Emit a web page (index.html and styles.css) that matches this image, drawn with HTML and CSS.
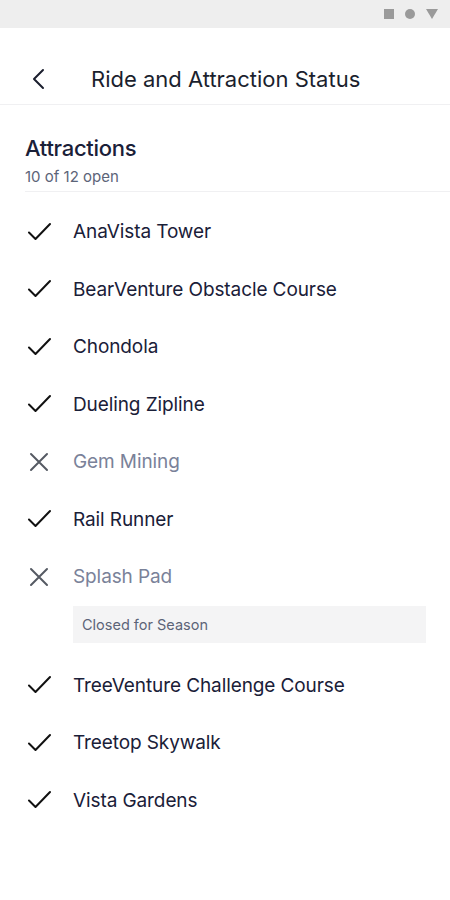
FILE: index.html
```html
<!DOCTYPE html>
<html lang="en">
<head>
  <meta charset="UTF-8" />
  <title>Ride and Attraction Status</title>
  <link rel="stylesheet" href="styles.css">
</head>
<body>

  <div class="status-bar">
    <span class="sb-square"></span>
    <span class="sb-circle"></span>
    <span class="sb-triangle"></span>
  </div>

  <header class="top-bar">
    <svg class="back" width="14" height="22" viewBox="0 0 14 22">
      <path d="M12 2 L3 11 L12 20" fill="none" stroke="#1b1f2e" stroke-width="2" stroke-linecap="round" stroke-linejoin="round"/>
    </svg>
    <h1>Ride and Attraction Status</h1>
  </header>

  <div class="section-head">
    <h2>Attractions</h2>
    <p class="count">10 of 12 open</p>
  </div>

  <ul class="list" id="list"></ul>

  <script>
    const rides = [
      { name: 'AnaVista Tower', open: true },
      { name: 'BearVenture Obstacle Course', open: true },
      { name: 'Chondola', open: true },
      { name: 'Dueling Zipline', open: true },
      { name: 'Gem Mining', open: false },
      { name: 'Rail Runner', open: true },
      { name: 'Splash Pad', open: false, note: 'Closed for Season' },
      { name: 'TreeVenture Challenge Course', open: true },
      { name: 'Treetop Skywalk', open: true },
      { name: 'Vista Gardens', open: true }
    ];

    const check = `<svg width="24" height="24" viewBox="0 0 24 24"><path d="M2 12.5 L8.5 19 L23 4" fill="none" stroke="#111" stroke-width="2" stroke-linecap="round" stroke-linejoin="round"/></svg>`;
    const cross = `<svg width="24" height="24" viewBox="0 0 24 24"><path d="M4 4 L20 20 M20 4 L4 20" fill="none" stroke="#555a63" stroke-width="2" stroke-linecap="round"/></svg>`;

    document.getElementById('list').innerHTML = rides.map(r => `
      <li class="${r.open ? 'ride' : 'ride closed'}">
        <div class="row">
          <span class="icon">${r.open ? check : cross}</span>
          <span class="name">${r.name}</span>
        </div>
        ${r.note ? `<div class="note">${r.note}</div>` : ''}
      </li>
    `).join('');
  </script>

</body>
</html>
```

FILE: styles.css
```css
body {
  margin: 0;
  font-family: Inter, 'Noto Sans', sans-serif;
  background: #fff;
  color: #1a2038;
  width: 450px;
}
.status-bar {
  height: 28px;
  background: #eeeeee;
  display: flex;
  align-items: center;
  justify-content: flex-end;
  gap: 11px;
  padding-right: 12px;
}
.sb-square {
  width: 10px;
  height: 10px;
  background: #9a9a9a;
}
.sb-circle {
  width: 10px;
  height: 10px;
  border-radius: 50%;
  background: #9a9a9a;
}
.sb-triangle {
  width: 0;
  height: 0;
  border-left: 6px solid transparent;
  border-right: 6px solid transparent;
  border-top: 10px solid #9a9a9a;
}
.top-bar {
  height: 50px;
  padding: 26px 0 0 31px;
  display: flex;
  align-items: center;
  border-bottom: 1px solid #f0f0f2;
}
.top-bar h1 {
  margin: 0 0 0 46px;
  font-size: 22px;
  font-weight: 400;
  color: #1b1f2e;
  letter-spacing: 0;
}
.section-head {
  margin-left: 25px;
  padding: 30px 0 5px;
  border-bottom: 1px solid #f0f0f2;
}
.section-head h2 {
  margin: 0;
  font-size: 22px;
  line-height: 27px;
  font-weight: 500;
  color: #1a2038;
  letter-spacing: -0.3px;
}
.count {
  margin: 6px 0 0;
  font-size: 15px;
  line-height: 18px;
  color: #5c6478;
}
.list {
  list-style: none;
  margin: 0;
  padding: 11px 0 0;
}
.row {
  height: 57.5px;
  display: flex;
  align-items: center;
  padding-left: 27px;
}
.icon {
  width: 24px;
  height: 24px;
  display: flex;
  margin-right: 22px;
}
.name {
  font-size: 19px;
  color: #1a2038;
  letter-spacing: -0.1px;
}
.closed .name {
  color: #7a8299;
}
.note {
  margin: 0 24px 14px 73px;
  background: #f4f4f5;
  padding: 10px 9px;
  font-size: 14.5px;
  line-height: 17px;
  color: #5c6478;
}
```
